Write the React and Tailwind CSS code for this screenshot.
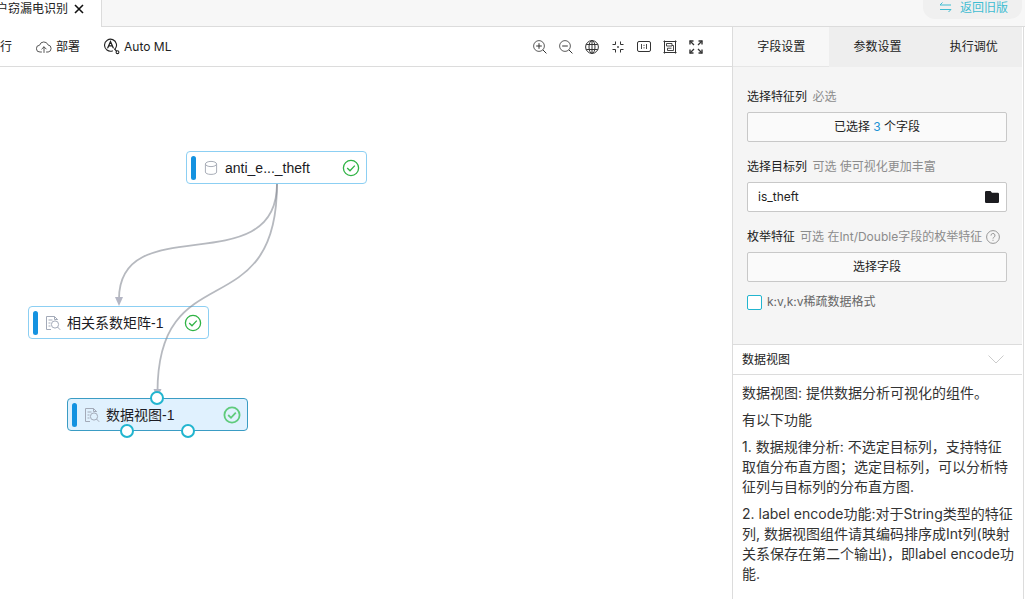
import React from "react";

function CloudUpIcon() {
  return (
    <svg width="16" height="14" viewBox="0 0 16 14" fill="none" stroke="#444" strokeWidth="0.9" strokeLinecap="round" strokeLinejoin="round">
      <path d="M5.5 12H4A3.4 3.4 0 0 1 3.6 5.2A4.4 4.4 0 0 1 12 4.9A3.6 3.6 0 0 1 12.2 12H10.5" />
      <path d="M8 12.5V7M5.8 9L8 6.8L10.2 9" />
    </svg>
  );
}

function AutoMlIcon() {
  return (
    <svg width="16" height="17" viewBox="0 0 16 17" fill="none" stroke="#222" strokeWidth="1.1" strokeLinecap="round">
      <path d="M11 11.2A6 6 0 1 0 8.4 12.9" />
      <path d="M3.8 9.8L6.5 3.6L9.2 9.8M4.8 7.8H8.2" strokeWidth="1.3" />
      <path d="M10.6 11.2L12.4 13" />
      <circle cx="13.5" cy="14.2" r="1.4" />
    </svg>
  );
}

function ToolIcon({ children }) {
  return (
    <svg width="14" height="14" viewBox="0 0 14 14" fill="none" stroke="#333" strokeWidth="1">
      {children}
    </svg>
  );
}

const tools = [
  ["放大", <ToolIcon key="i"><circle cx="6" cy="6" r="5.4" strokeWidth="0.8" /><path d="M9.9 9.9L13.4 13.4M3.2 6H8.8M6 3.2V8.8" /></ToolIcon>],
  ["缩小", <ToolIcon key="i"><circle cx="6" cy="6" r="5.4" strokeWidth="0.8" /><path d="M9.9 9.9L13.4 13.4M3.2 6H8.8" /></ToolIcon>],
  ["全局", <ToolIcon key="i"><circle cx="7" cy="7" r="6.4" /><ellipse cx="7" cy="7" rx="3" ry="6.4" /><path d="M7 0.7V13.3M1.2 4.5H12.8M1.2 9.5H12.8" /></ToolIcon>],
  ["居中", <ToolIcon key="i"><path d="M4.5 1.5V4.5H1.5M9.5 1.5V4.5H12.5M4.5 12.5V9.5H1.5M9.5 12.5V9.5H12.5" /><rect x="6.2" y="6.2" width="1.6" height="1.6" fill="#333" stroke="none" /></ToolIcon>],
  ["实际大小", <ToolIcon key="i"><rect x="0.5" y="1.5" width="13" height="10" rx="1.5" /><path d="M4.5 4V9M9.5 4V9M7 4.8V6M7 7.2V8.4" strokeWidth="0.9" /></ToolIcon>],
  ["框选", <ToolIcon key="i"><path d="M0.5 1.5H13.5M0.5 12.5H13.5M1.5 0.5V13.5M12.5 0.5V13.5" /><path d="M3.5 3.5H9V6H3.5ZM9 5.5H10.5V10.5H4.5V8.2H8.5" strokeWidth="0.9" /></ToolIcon>],
  ["全屏", <ToolIcon key="i"><path d="M1 4.5V1H4.5M9.5 1H13V4.5M13 9.5V13H9.5M4.5 13H1V9.5" strokeWidth="1.4" /><path d="M1 1L5 5M13 1L9 5M13 13L9 9M1 13L5 9" strokeWidth="1.3" /></ToolIcon>],
];

function DatabaseIcon() {
  return (
    <svg width="16" height="16" viewBox="0 0 16 16" fill="none" stroke="#a9aeb8" strokeWidth="1">
      <ellipse cx="8" cy="4" rx="5.6" ry="2.6" />
      <path d="M2.4 4V12C2.4 13.4 4.6 14.4 8 14.4S13.6 13.4 13.6 12V4" />
    </svg>
  );
}

function ReportIcon() {
  return (
    <svg width="16" height="16" viewBox="0 0 16 16" fill="none" stroke="#a3aab8" strokeWidth="1">
      <path d="M6 14.5H1.5V1.5H9.5L12.5 4.5V5M9.5 1.5V4.5H12.5M3.5 5H7.5M3.5 8H5.5M3.5 11H5.5" />
      <circle cx="10" cy="9.5" r="3.6" />
      <path d="M12.5 12L15.2 14.8" />
    </svg>
  );
}

function CheckIcon({ bold }) {
  return (
    <svg width="18" height="18" viewBox="0 0 18 18" fill="none" stroke={bold ? "#5fcb7c" : "#2fb344"} strokeWidth={bold ? 1.8 : 1.3}>
      <circle cx="9" cy="9" r="7.6" />
      <path d="M5.2 9L8 11.8L12.8 6.6" />
    </svg>
  );
}

function Node({ place, icon, label, active }) {
  return (
    <div className={`absolute flex h-[33px] w-[181px] items-center rounded border pr-1.5 pl-1 ${active ? "border-[#3a9cc4] bg-[#e0f1fe]" : "border-[#8ccff3] bg-white"} ${place}`}>
      <span className="h-6 w-[5px] rounded-sm bg-[#1492e0]" />
      <span className="ml-[7px]">{icon}</span>
      <span className="ml-1.5 flex-1 whitespace-nowrap text-sm text-[#1c1c24]">{label}</span>
      <CheckIcon bold={active} />
    </div>
  );
}

function Edges() {
  return (
    <svg className="pointer-events-none absolute top-0 left-0" width="400" height="400" viewBox="0 0 400 400" fill="none" stroke="#868a94" strokeOpacity="0.6" strokeWidth="1.8">
      <path d="M277 117C277 216 119 141 119 232" />
      <path d="M277 117C277 262 157.5 186 157.5 325" />
      <path d="M115 230H123L119 239Z" fill="#b4b6c4" stroke="none" />
      <path d="M153.5 322H161.5L157.5 331Z" fill="#b4b6c4" stroke="none" />
    </svg>
  );
}

function Port({ place }) {
  return <span className={`absolute size-[14px] rounded-full border-2 border-[#22b5cf] bg-white ${place}`} />;
}

const latin = "font-['Liberation_Sans','Noto_Sans_CJK_SC',sans-serif]";

export default function App() {
  return (
    <div className="flex min-h-screen flex-col overflow-hidden bg-white font-[Inter,'Noto_Sans_CJK_SC',sans-serif] text-xs text-[#222]">
      <header className="flex h-[27px] items-start">
        <div className="flex w-[101px] items-center gap-1.5 leading-[18px]">
          <span className="-ml-1 whitespace-nowrap">户窃漏电识别</span>
          <button aria-label="关闭" className="flex">
            <svg width="10" height="10" viewBox="0 0 10 10" stroke="#111" strokeWidth="1.6"><path d="M1 1L9 9M9 1L1 9" /></svg>
          </button>
        </div>
        <div className="flex h-[27px] flex-1 items-start justify-end border-b border-l border-[#dcdcdc] bg-[#f7f7f7] pr-[3px]">
          <button className="flex h-[19px] items-start gap-2 rounded-b-xl bg-[#f0f0f0] pr-3.5 pl-4 leading-[15px] text-[#3fbdd2]">
            <svg className="mt-0.5" width="13" height="11" viewBox="0 0 13 11" fill="none" stroke="currentColor" strokeWidth="1">
              <path d="M3.5 0.5L1 3H12M9.5 10L12 7.5H1" />
            </svg>
            返回旧版
          </button>
        </div>
      </header>

      <div className="flex flex-1">
        <main className="flex min-w-0 flex-1 flex-col">
          <div className="flex h-10 items-center border-b border-[#dcdcdc] pr-[29px]">
            <button>行</button>
            <button className="ml-6 flex items-center gap-1"><CloudUpIcon />部署</button>
            <button className="ml-6 flex items-center gap-1"><AutoMlIcon />Auto ML</button>
            <div className="ml-auto flex items-center gap-3">
              {tools.map(([name, icon]) => (
                <button key={name} aria-label={name} className="flex">{icon}</button>
              ))}
            </div>
          </div>
          <div className={`relative flex-1 ${latin}`}>
            <Node place="top-[84px] left-[186px]" icon={<DatabaseIcon />} label="anti_e..._theft" />
            <Node place="top-[239px] left-[28px]" icon={<ReportIcon />} label="相关系数矩阵-1" />
            <Edges />
            <Node place="top-[331px] left-[67px]" icon={<ReportIcon />} label="数据视图-1" active />
            <Port place="top-[324px] left-[150px]" />
            <Port place="top-[357px] left-[120px]" />
            <Port place="top-[357px] left-[181px]" />
          </div>
        </main>

        <aside className="mr-px flex w-[292px] flex-col border-x border-[#dcdcdc] pr-px">
          <div className="flex h-10 bg-[#eee]">
            <button className="flex-1 border-b border-[#e6e6e6] bg-[#f7f7f7]">字段设置</button>
            <button className="flex-1">参数设置</button>
            <button className="flex-1">执行调优</button>
          </div>
          <form className="h-[278px] border-b border-[#dcdcdc] bg-[#f5f5f5] pt-[21px] pr-[15px] pl-3.5">
            <div className="mb-4 flex flex-col gap-1.5">
              <label htmlFor="features" className="leading-[18px]">选择特征列 <span className="ml-0.5 text-[#8c8c8c]">必选</span></label>
              <button id="features" type="button" className="h-[30px] rounded-xs border border-[#c8c8c8] bg-[#fafafa]">
                已选择 <span className="text-[#1c93d4]">3</span> 个字段
              </button>
            </div>
            <div className="mb-4 flex flex-col gap-1.5">
              <label htmlFor="target" className="leading-[18px]">选择目标列 <span className="ml-0.5 text-[#8c8c8c]">可选 使可视化更加丰富</span></label>
              <div className="flex h-[30px] items-center rounded-xs border border-[#c8c8c8] bg-white pr-[7px] pl-2.5">
                <input id="target" defaultValue="is_theft" className="min-w-0 flex-1 bg-transparent outline-none" />
                <svg width="14" height="12" viewBox="0 0 14 12" fill="#1c1c20"><path d="M1.3 0H5.5L7 1.8H12.7A1.3 1.3 0 0 1 14 3.1V10.7A1.3 1.3 0 0 1 12.7 12H1.3A1.3 1.3 0 0 1 0 10.7V1.3A1.3 1.3 0 0 1 1.3 0Z" /></svg>
              </div>
            </div>
            <div className="mb-3 flex flex-col gap-1.5">
              <label htmlFor="enums" className="flex items-center whitespace-nowrap leading-[18px]">
                枚举特征 <span className="mr-1 ml-[5px] text-[#8c8c8c]">可选 在Int/Double字段的枚举特征</span>
                <svg width="14" height="14" viewBox="0 0 14 14" fill="none" stroke="#8c8c8c" strokeWidth="0.9">
                  <circle cx="7" cy="7" r="6.4" />
                  <path d="M5 5.6A2 2 0 1 1 7.8 7.3Q7 7.7 7 8.6M7 9.8V10.8" />
                </svg>
              </label>
              <button id="enums" type="button" className="h-[30px] rounded-xs border border-[#c8c8c8] bg-[#fafafa]">选择字段</button>
            </div>
            <label className="flex items-center gap-[5px] leading-4 text-[#666]">
              <input type="checkbox" className="size-[15px] appearance-none rounded-xs border border-[#22b5cf] bg-white checked:bg-[#22b5cf]" />
              k:v,k:v稀疏数据格式
            </label>
          </form>
          <button className="flex h-[30px] items-center justify-between border-b border-[#dcdcdc] pr-[18px] pl-[9px]">
            数据视图
            <svg width="16" height="9" viewBox="0 0 16 9" fill="none" stroke="#ccc" strokeWidth="1"><path d="M0.5 0.5L8 8L15.5 0.5" /></svg>
          </button>
          <div className="flex flex-col gap-[7px] pt-2 pr-2 pl-[9px] text-sm leading-5 text-[#333]">
            <p>数据视图: 提供数据分析可视化的组件。</p>
            <p>有以下功能</p>
            <p>1. 数据规律分析: 不选定目标列，支持特征取值分布直方图；选定目标列，可以分析特征列与目标列的分布直方图.</p>
            <p>2. label encode功能:对于String类型的特征列, 数据视图组件请其编码排序成Int列(映射关系保存在第二个输出)，即label encode功能.</p>
          </div>
        </aside>
      </div>
    </div>
  );
}
